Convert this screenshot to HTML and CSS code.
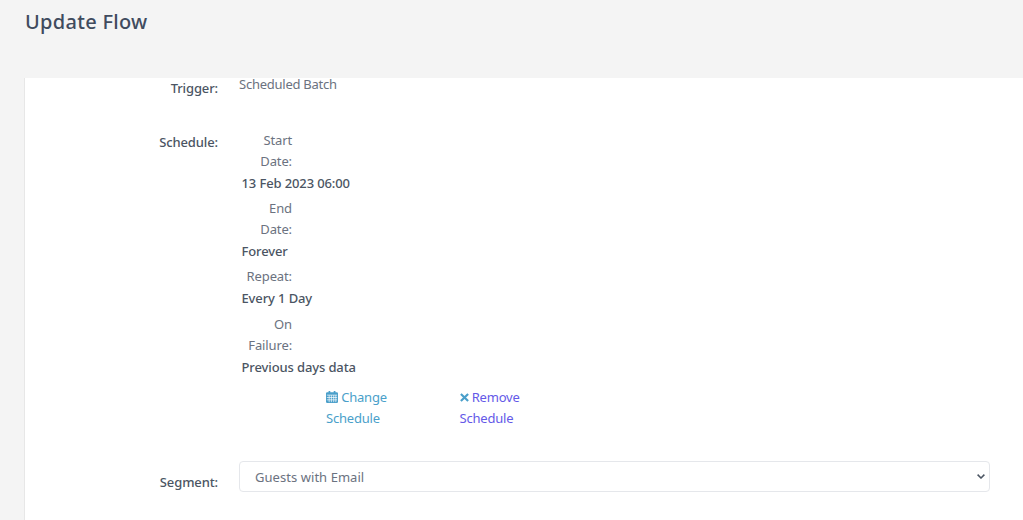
FILE: index.html
```html
<!DOCTYPE html>
<html lang="en">
<head>
<meta charset="utf-8">
<title>Update Flow</title>
<link rel="stylesheet" href="styles.css">
</head>
<body>
<header class="page-header"><h1 class="page-title">Update Flow</h1></header>
<main class="card">
  <div class="row row-trigger">
    <div class="label">Trigger:</div>
    <div class="value trigger-value">Scheduled Batch</div>
  </div>
  <div class="row row-schedule">
    <div class="label">Schedule:</div>
    <div class="value">
      <dl class="schedule">
        <dt>Start Date:</dt><dd>13 Feb 2023 06:00</dd>
        <dt>End Date:</dt><dd>Forever</dd>
        <dt>Repeat:</dt><dd>Every 1 Day</dd>
        <dt>On Failure:</dt><dd>Previous days data</dd>
      </dl>
      <div class="actions">
        <a class="action action-change" href="#"><svg class="icon" viewBox="0 0 14 14"><path fill="currentColor" d="M3 0h2v1.500h4V0h2v1.500h1.500A1.500 1.500 0 0 1 14 3v9.500A1.500 1.500 0 0 1 12.500 14h-11A1.500 1.500 0 0 1 0 12.500V3a1.500 1.500 0 0 1 1.500-1.500H3z"/><path stroke="#fff" stroke-width=".8" fill="none" d="M1 4.800h12M1 7.600h12M1 10.300h12M3.700 4.800V13M6.300 4.800V13M9 4.800V13M11.500 4.800V13"/></svg> Change Schedule</a>
        <a class="action action-remove" href="#"><svg class="icon-x" viewBox="0 0 10 10"><path stroke="currentColor" stroke-width="2.400" d="M1 1l8 8M9 1l-8 8"/></svg> Remove Schedule</a>
      </div>
    </div>
  </div>
  <div class="row row-segment">
    <div class="label">Segment:</div>
    <div class="value">
      <div class="select"><span class="select-text">Guests with Email</span>
        <svg class="chevron" viewBox="0 0 8 5"><path fill="none" stroke="currentColor" stroke-width="1.500" d="M.6.600L4 4l3.400-3.400"/></svg>
      </div>
    </div>
  </div>
</main>
</body>
</html>
```
FILE: styles.css
```css
* { box-sizing: border-box; }
html, body { margin: 0; height: 100%; overflow: hidden; }
body {
  background: #f4f4f4;
  color: #6b7280;
  font-family: "Noto Sans", "Open Sans", sans-serif;
  font-size: 13px;
  line-height: 21px;
  letter-spacing: -.12px;
}
.page-header { height: 78px; padding: 8px 25px 0; }
.page-title {
  margin: 0;
  font-size: 20px;
  line-height: 28px;
  font-weight: 500;
  letter-spacing: .3px;
  color: #404b5e;
}
.card {
  margin-left: 25px;
  height: 442px;
  background: #fff;
  box-shadow: -1px 0 0 rgba(0, 0, 0, .05);
}
.row { display: grid; grid-template-columns: 193px 1fr; column-gap: 21px; padding-right: 33px; }
.label { text-align: right; font-weight: 500; color: #4b5563; }
.row-trigger { height: 52px; }
.trigger-value { line-height: 13px; letter-spacing: -.25px; }
.row-schedule { height: 331px; }
.row-schedule .label { padding-top: 2px; }
.schedule { margin: 0; }
.schedule dt { width: 53px; margin-bottom: 1px; text-align: right; }
.schedule dd { margin: 0 0 4.2px 2.5px; font-weight: 500; color: #4b5563; white-space: nowrap; }
.actions { display: flex; margin: 9.6px 0 0 87px; }
.action { display: block; width: 70px; margin-right: 63.5px; text-decoration: none; letter-spacing: -.2px; }
.action-change { color: #4a9fca; }
.action-remove { color: #6459e8; }
.icon { width: 12px; height: 12px; vertical-align: -1px; }
.icon-x { width: 9px; height: 9px; color: #4a9fca; }
.row-segment .label { padding-top: 11px; }
.select {
  display: flex;
  align-items: center;
  justify-content: space-between;
  height: 31px;
  padding: 0 4px 0 15px;
  background: #fff;
  border: 1px solid #e5e7eb;
  border-radius: 4px;
  letter-spacing: .05px;
}
.select-text { margin-top: 2px; }
.chevron { width: 8px; height: 5px; color: #4b5563; }
```
